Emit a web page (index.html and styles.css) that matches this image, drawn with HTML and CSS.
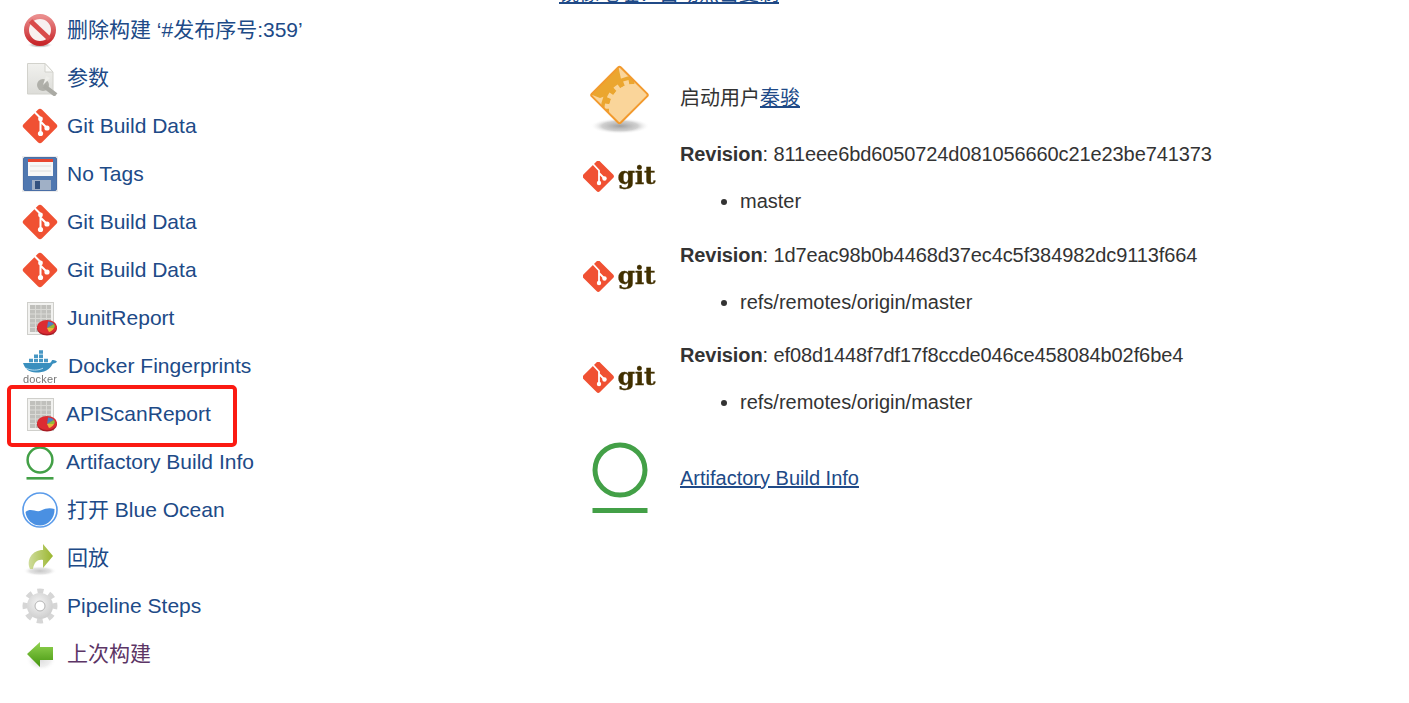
FILE: index.html
```html
<!DOCTYPE html>
<html lang="zh">
<head>
<meta charset="utf-8">
<title>Jenkins build</title>
<link rel="stylesheet" href="styles.css">
</head>
<body>
<svg class="defs" aria-hidden="true">
  <defs>
    <linearGradient id="red" x1="0" y1="0" x2="0" y2="1"><stop offset="0" stop-color="#ea8c8c"/><stop offset="1" stop-color="#c8262a"/></linearGradient>
    <linearGradient id="paper" x1="0" y1="0" x2="0" y2="1"><stop offset="0" stop-color="#f1f1ee"/><stop offset="1" stop-color="#dcdcd8"/></linearGradient>
    <linearGradient id="lime" x1="0" y1="0" x2="1" y2="0"><stop offset="0" stop-color="#cfdc9c"/><stop offset="1" stop-color="#9ab62e"/></linearGradient>
    <linearGradient id="green" x1="0" y1="0" x2="0" y2="1"><stop offset="0" stop-color="#93d452"/><stop offset="1" stop-color="#44950f"/></linearGradient>
    <radialGradient id="steel" cx=".45" cy=".4" r=".7"><stop offset="0" stop-color="#f4f4f4"/><stop offset="1" stop-color="#c8c8c8"/></radialGradient>
    <radialGradient id="shade"><stop offset="0" stop-color="#a0a0a0"/><stop offset=".6" stop-color="#c4c4c4" stop-opacity=".8"/><stop offset="1" stop-color="#fff" stop-opacity="0"/></radialGradient>
    <clipPath id="diamond"><rect x="11" y="13.500" width="41" height="41" rx="2" transform="rotate(45 31.500 34)"/></clipPath>
    <symbol id="i-ban" viewBox="0 0 36 36">
      <ellipse cx="18" cy="33" rx="13" ry="3" fill="url(#shade)"/>
      <circle cx="18" cy="18" r="13.500" fill="#f8f0f0" stroke="url(#red)" stroke-width="5"/>
      <path d="M8.500 9 L27.500 27" stroke="#d94a4a" stroke-width="5"/>
    </symbol>
    <symbol id="i-param" viewBox="0 0 36 36">
      <path d="M5.500 3.500H23L31 12V34H5.500Z" fill="url(#paper)" stroke="#d2d2cc"/>
      <path d="M23 3.500V12H31Z" fill="#fafaf8" stroke="#d2d2cc"/>
      <circle cx="21" cy="25" r="6" fill="#b0b0aa"/>
      <path d="M21 25L28 18L24 16Z" fill="#eeeeea"/>
      <path d="M22 26L34 35" stroke="#aaaaa4" stroke-width="4.500"/>
    </symbol>
    <symbol id="i-git" viewBox="0 0 36 36">
      <rect x="5" y="5" width="26" height="26" rx="3" transform="rotate(45 18 18)" fill="#f05133"/>
      <path d="M12 3.500L18.500 10V25M18.500 13.500L25 20" fill="none" stroke="#fff" stroke-width="2"/>
      <circle cx="18.500" cy="25.500" r="2.600" fill="#fff"/>
      <circle cx="25" cy="20" r="2.600" fill="#fff"/>
      <circle cx="18.500" cy="11" r="2.400" fill="#fff"/>
    </symbol>
    <symbol id="i-save" viewBox="0 0 36 36">
      <rect width="36" height="36" fill="#ececec"/>
      <rect x="1.500" y="1.500" width="33" height="33" rx="1.500" fill="#5078b0" stroke="#4a6ea6"/>
      <rect x="6" y="3" width="25" height="17" fill="#f7f7f7"/>
      <rect x="6" y="3" width="25" height="3" fill="#e8452f"/>
      <path d="M8 10H29M8 15H29" stroke="#dcdcdc"/>
      <rect x="10" y="24" width="19" height="10" fill="#a0b0c6"/>
      <rect x="13" y="25" width="5" height="8" fill="#33527f"/>
    </symbol>
    <symbol id="i-report" viewBox="0 0 36 36">
      <rect x="5.500" y="2.500" width="26" height="32" fill="#f2f2f0" stroke="#cfcfcb"/>
      <rect x="8" y="5" width="21" height="27" fill="#c0c0bc"/>
      <path d="M8 9.500H29M8 14H29M8 18.500H29M8 23H29M8 27.500H29M13.500 5V32M19 5V32M24.500 5V32" stroke="#dadad6" stroke-width="1"/>
      <ellipse cx="25" cy="28.500" rx="10" ry="7" fill="#a81c24"/>
      <ellipse cx="25" cy="27" rx="10" ry="7" fill="#dc2c32"/>
      <path d="M25 28L26 21.500C28.500 21.500 31 22.500 32 24Z" fill="#4f7fc0"/>
      <path d="M25 28L32 24C33 25.500 33 27 32 28Z" fill="#8fbc3a"/>
      <path d="M25 28L32 28C31 30 29 31.500 27 32Z" fill="#e9b63a"/>
    </symbol>
    <symbol id="i-docker" viewBox="0 0 36 36">
      <g transform="translate(0 1.500) scale(1 .85)">
        <path d="M1 16H27C29 16 29.500 13 30 12.500C32 12 34 13 35 14.500C33.500 16.500 31.500 16.500 30.500 17C28 24 22 27 14 27C7 27 3 23 1 16Z" fill="#3a8fbe"/>
        <path d="M7 11h4v4H7zM12 11h4v4h-4zM17 11h4v4h-4zM12 6h4v4h-4zM17 6h4v4h-4zM17 1h4v4h-4zM22 11h4v4h-4z" fill="#4797c4"/>
        <path d="M4 22C9 25 16 25 21 22" stroke="#bfe0f0" fill="none"/>
      </g>
      <text x="18" y="34.500" class="docker-word">docker</text>
    </symbol>
    <symbol id="i-art" viewBox="0 0 36 36">
      <circle cx="18" cy="16" r="12.400" fill="none" stroke="#43a047" stroke-width="2.500"/>
      <rect x="4.500" y="33" width="27" height="2.600" fill="#43a047"/>
    </symbol>
    <symbol id="i-ocean" viewBox="0 0 36 36">
      <circle cx="18" cy="18" r="17" fill="#fff" stroke="#5a9bea" stroke-width="1.600"/>
      <path d="M3.500 20C9 15 14 21 19 18.500C24 16 28 15.500 32.500 17C33 26 26 33.500 18 33.500C10 33.500 4 27 3.500 20Z" fill="#4a90e2"/>
    </symbol>
    <symbol id="i-redo" viewBox="0 0 36 36">
      <ellipse cx="18" cy="31" rx="17" ry="5" fill="url(#shade)" opacity=".6"/>
      <path d="M8 29C4 20 10 10 21 10V4L31 16L21 28V20C16 19 12 22 11 29Z" fill="url(#lime)"/>
    </symbol>
    <symbol id="i-gear" viewBox="0 0 36 36">
      <circle cx="18" cy="18" r="15" fill="none" stroke="#d6d6d6" stroke-width="5" stroke-dasharray="6 5.781" transform="rotate(-11.460 18 18)"/>
      <circle cx="18" cy="18" r="13" fill="url(#steel)"/>
      <circle cx="18" cy="18" r="5" fill="#fff" stroke="#b4b4b4"/>
    </symbol>
    <symbol id="i-back" viewBox="0 0 36 36">
      <ellipse cx="19" cy="24" rx="15" ry="11" fill="url(#shade)" opacity=".35"/>
      <path d="M5 18L18 6V11H31V24H18V31Z" fill="url(#green)"/>
    </symbol>
    <symbol id="i-user" viewBox="0 0 64 74">
      <ellipse cx="32" cy="65" rx="30" ry="8" fill="url(#shade)"/>
      <g clip-path="url(#diamond)">
        <rect width="64" height="74" fill="#fad59a"/>
        <path d="M30 4L2 33L12 37Q30 32 33 18Z" fill="#eba62f"/>
        <circle cx="46" cy="48" r="29" fill="none" stroke="#eba62f" stroke-width="8"/>
        <circle cx="46" cy="48" r="27" fill="none" stroke="#fad59a" stroke-width="5" stroke-dasharray="5 5.600"/>
        <circle cx="46" cy="48" r="25" fill="#fad59a"/>
      </g>
      <rect x="11" y="13.500" width="41" height="41" rx="2" transform="rotate(45 31.500 34)" fill="none" stroke="#f29a2e" stroke-width="2"/>
    </symbol>
    <symbol id="i-gitlogo" viewBox="0 0 74 34">
      <rect x="3.500" y="3.500" width="23.500" height="23.500" rx="2.500" transform="rotate(45 15.250 15.250)" fill="#f05133"/>
      <path d="M10 3L16 9.500V22M16 12L21.500 17.500" fill="none" stroke="#fff" stroke-width="1.800"/>
      <circle cx="16" cy="22" r="2.200" fill="#fff"/>
      <circle cx="21.500" cy="17.500" r="2.200" fill="#fff"/>
      <text x="34.500" y="23" class="git-word">git</text>
    </symbol>
    <symbol id="i-artbig" viewBox="0 0 60 72">
      <circle cx="30" cy="28" r="25" fill="none" stroke="#43a047" stroke-width="5"/>
      <rect x="2.500" y="66" width="55" height="5" fill="#43a047"/>
    </symbol>
  </defs>
</svg>

<div class="page">
  <nav class="side">
    <a class="item" href="#"><svg class="ic"><use href="#i-ban"/></svg>删除构建 ‘#发布序号:359’</a>
    <a class="item" href="#"><svg class="ic"><use href="#i-param"/></svg>参数</a>
    <a class="item" href="#"><svg class="ic"><use href="#i-git"/></svg>Git Build Data</a>
    <a class="item" href="#"><svg class="ic"><use href="#i-save"/></svg>No Tags</a>
    <a class="item" href="#"><svg class="ic"><use href="#i-git"/></svg>Git Build Data</a>
    <a class="item" href="#"><svg class="ic"><use href="#i-git"/></svg>Git Build Data</a>
    <a class="item" href="#"><svg class="ic"><use href="#i-report"/></svg>JunitReport</a>
    <a class="item item-wide" href="#"><svg class="ic"><use href="#i-docker"/></svg>Docker Fingerprints</a>
    <a class="item item-tight" href="#"><svg class="ic"><use href="#i-report"/></svg>APIScanReport</a>
    <a class="item item-tight" href="#"><svg class="ic"><use href="#i-art"/></svg>Artifactory Build Info</a>
    <a class="item" href="#"><svg class="ic"><use href="#i-ocean"/></svg>打开 Blue Ocean</a>
    <a class="item" href="#"><svg class="ic"><use href="#i-redo"/></svg>回放</a>
    <a class="item" href="#"><svg class="ic"><use href="#i-gear"/></svg>Pipeline Steps</a>
    <a class="item item-visited" href="#"><svg class="ic"><use href="#i-back"/></svg>上次构建</a>
  </nav>

  <main class="main">
    <p class="top-link"><a href="#">镜像地址：自动点击复制</a></p>

    <div class="row row-user">
      <div class="logo"><svg class="logo-user"><use href="#i-user"/></svg></div>
      <div>启动用户<a href="#">秦骏</a></div>
    </div>

    <div class="row row-rev">
      <div class="logo"><svg class="logo-git"><use href="#i-gitlogo"/></svg></div>
      <div class="rev">
        <p><b>Revision</b>: 811eee6bd6050724d081056660c21e23be741373</p>
        <ul><li>master</li></ul>
      </div>
    </div>

    <div class="row row-rev">
      <div class="logo"><svg class="logo-git"><use href="#i-gitlogo"/></svg></div>
      <div class="rev">
        <p><b>Revision</b>: 1d7eac98b0b4468d37ec4c5f384982dc9113f664</p>
        <ul><li>refs/remotes/origin/master</li></ul>
      </div>
    </div>

    <div class="row row-rev">
      <div class="logo"><svg class="logo-git"><use href="#i-gitlogo"/></svg></div>
      <div class="rev">
        <p><b>Revision</b>: ef08d1448f7df17f8ccde046ce458084b02f6be4</p>
        <ul><li>refs/remotes/origin/master</li></ul>
      </div>
    </div>

    <div class="row row-art">
      <div class="logo"><svg class="logo-art"><use href="#i-artbig"/></svg></div>
      <div><a href="#">Artifactory Build Info</a></div>
    </div>
  </main>
</div>

<div class="callout"></div>
</body>
</html>
```

FILE: styles.css
```css
html, body {
  margin: 0;
  height: 703px;
  overflow: hidden;
  background: #fff;
}

body {
  position: relative;
  font-family: "Liberation Sans", "Noto Sans CJK SC", sans-serif;
  font-size: 20px;
  line-height: 24px;
  color: #333;
}

a {
  color: #204a87;
}

.defs {
  position: absolute;
  width: 0;
  height: 0;
}

.page {
  display: flex;
  align-items: flex-start;
}

.side {
  flex: none;
  width: 580px;
  box-sizing: border-box;
  padding: 6px 0 0 22px;
  display: flex;
  flex-direction: column;
  font-size: 21px;
}

.item {
  height: 48px;
  display: flex;
  align-items: center;
  white-space: pre;
  text-decoration: none;
}

.ic {
  flex: none;
  width: 36px;
  height: 36px;
  margin-right: 9px;
  filter: blur(.5px);
}

.item-tight .ic {
  margin-right: 8px;
}

.item-wide .ic {
  margin-right: 10px;
}

.item-visited {
  color: #5c3566;
}

.main {
  flex: 1;
  margin-top: -18px;
}

.top-link {
  margin: 0 0 0 -21px;
  height: 24px;
}

.row {
  display: flex;
  align-items: center;
}

.row-user {
  margin-top: 56px;
  margin-bottom: 8px;
  height: 72px;
}

.row-rev {
  height: 71px;
  margin-bottom: 29.500px;
}

.row-art {
  height: 68px;
}

.logo {
  flex: none;
  width: 80px;
  margin-right: 20px;
  display: flex;
  justify-content: center;
}

.logo-user {
  width: 64px;
  height: 74px;
  filter: blur(.5px);
}

.logo-git {
  width: 74px;
  height: 34px;
  filter: blur(.5px);
}

.logo-art {
  width: 60px;
  height: 72px;
}

.rev p {
  margin: 0;
  letter-spacing: -.1px;
}

.rev ul {
  margin: 23px 0 0;
  padding-left: 60px;
}

.git-word {
  font-family: "DejaVu Serif", serif;
  font-weight: 700;
  font-size: 25px;
  letter-spacing: -.3px;
  fill: #413000;
  stroke: #413000;
  stroke-width: .3px;
}

.docker-word {
  font-family: "Liberation Sans", sans-serif;
  font-size: 11px;
  letter-spacing: .2px;
  text-anchor: middle;
  fill: #777;
}

.callout {
  position: absolute;
  left: 7px;
  top: 385px;
  width: 230px;
  height: 62px;
  box-sizing: border-box;
  border: 4px solid #fb1a12;
  border-radius: 5px;
}
```
